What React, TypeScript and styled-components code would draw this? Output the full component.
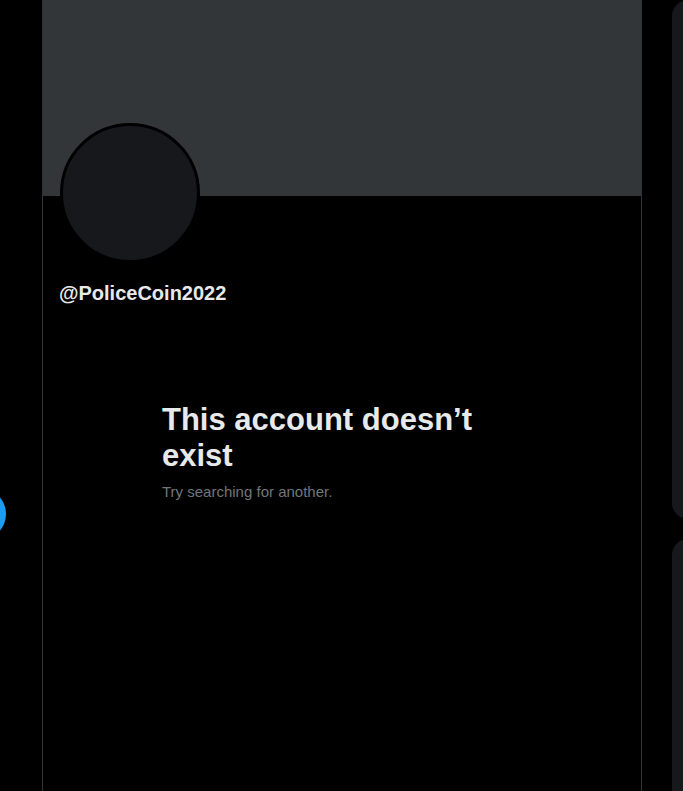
import React from "react";
import styled, { createGlobalStyle } from "styled-components";

const Global = createGlobalStyle`
  html, body {
    margin: 0;
    padding: 0;
    background: #000;
    overflow: hidden;
  }
  body {
    font-family: "Liberation Sans", Arial, sans-serif;
    color: #e7e9ea;
  }
`;

const Page = styled.div`
  display: flex;
  width: 683px;
  height: 791px;
  background: #000;
  overflow: hidden;
`;

const LeftNav = styled.nav`
  position: relative;
  width: 42px;
  flex: 0 0 42px;
`;

const ComposeButton = styled.div`
  position: absolute;
  left: -46px;
  top: 488px;
  width: 52px;
  height: 52px;
  border-radius: 50%;
  background: #1d9bf0;
`;

const Main = styled.main`
  width: 600px;
  flex: 0 0 600px;
  box-sizing: border-box;
  border-left: 1px solid #2f3336;
  border-right: 1px solid #2f3336;
  display: flex;
  flex-direction: column;
`;

const Banner = styled.div`
  height: 196px;
  background: #333639;
`;

const ProfileInfo = styled.div`
  padding: 0 16px;
  display: flex;
  flex-direction: column;
`;

const Avatar = styled.div`
  width: 140px;
  height: 140px;
  box-sizing: border-box;
  margin: -73px 0 0 1px;
  border-radius: 50%;
  border: 3px solid #000;
  background: #16181c;
`;

const Handle = styled.div`
  margin-top: 18px;
  font-size: 20px;
  line-height: 24px;
  font-weight: 700;
  color: #e7e9ea;
`;

const EmptyState = styled.section`
  padding: 97px 0 0 119px;
  max-width: 336px;
  display: flex;
  flex-direction: column;
  gap: 8px;
`;

const Title = styled.h1`
  margin: 0;
  font-size: 31px;
  line-height: 36px;
  font-weight: 800;
  color: #e7e9ea;
`;

const Subtitle = styled.p`
  margin: 0;
  font-size: 15px;
  line-height: 20px;
  color: #71767b;
`;

const Sidebar = styled.aside`
  flex: 1;
  padding-left: 30px;
  display: flex;
  flex-direction: column;
  gap: 20px;
`;

const Panel = styled.div<{ $h: number }>`
  height: ${(p) => p.$h}px;
  flex: 0 0 auto;
  width: 350px;
  border-radius: 16px;
  background: #16181c;
`;

export default function App() {
  return (
    <>
      <Global />
      <Page>
        <LeftNav>
          <ComposeButton />
        </LeftNav>
        <Main>
          <Banner />
          <ProfileInfo>
            <Avatar />
            <Handle>@PoliceCoin2022</Handle>
          </ProfileInfo>
          <EmptyState>
            <Title>This account doesn’t exist</Title>
            <Subtitle>Try searching for another.</Subtitle>
          </EmptyState>
        </Main>
        <Sidebar>
          <Panel $h={519} />
          <Panel $h={400} />
        </Sidebar>
      </Page>
    </>
  );
}
